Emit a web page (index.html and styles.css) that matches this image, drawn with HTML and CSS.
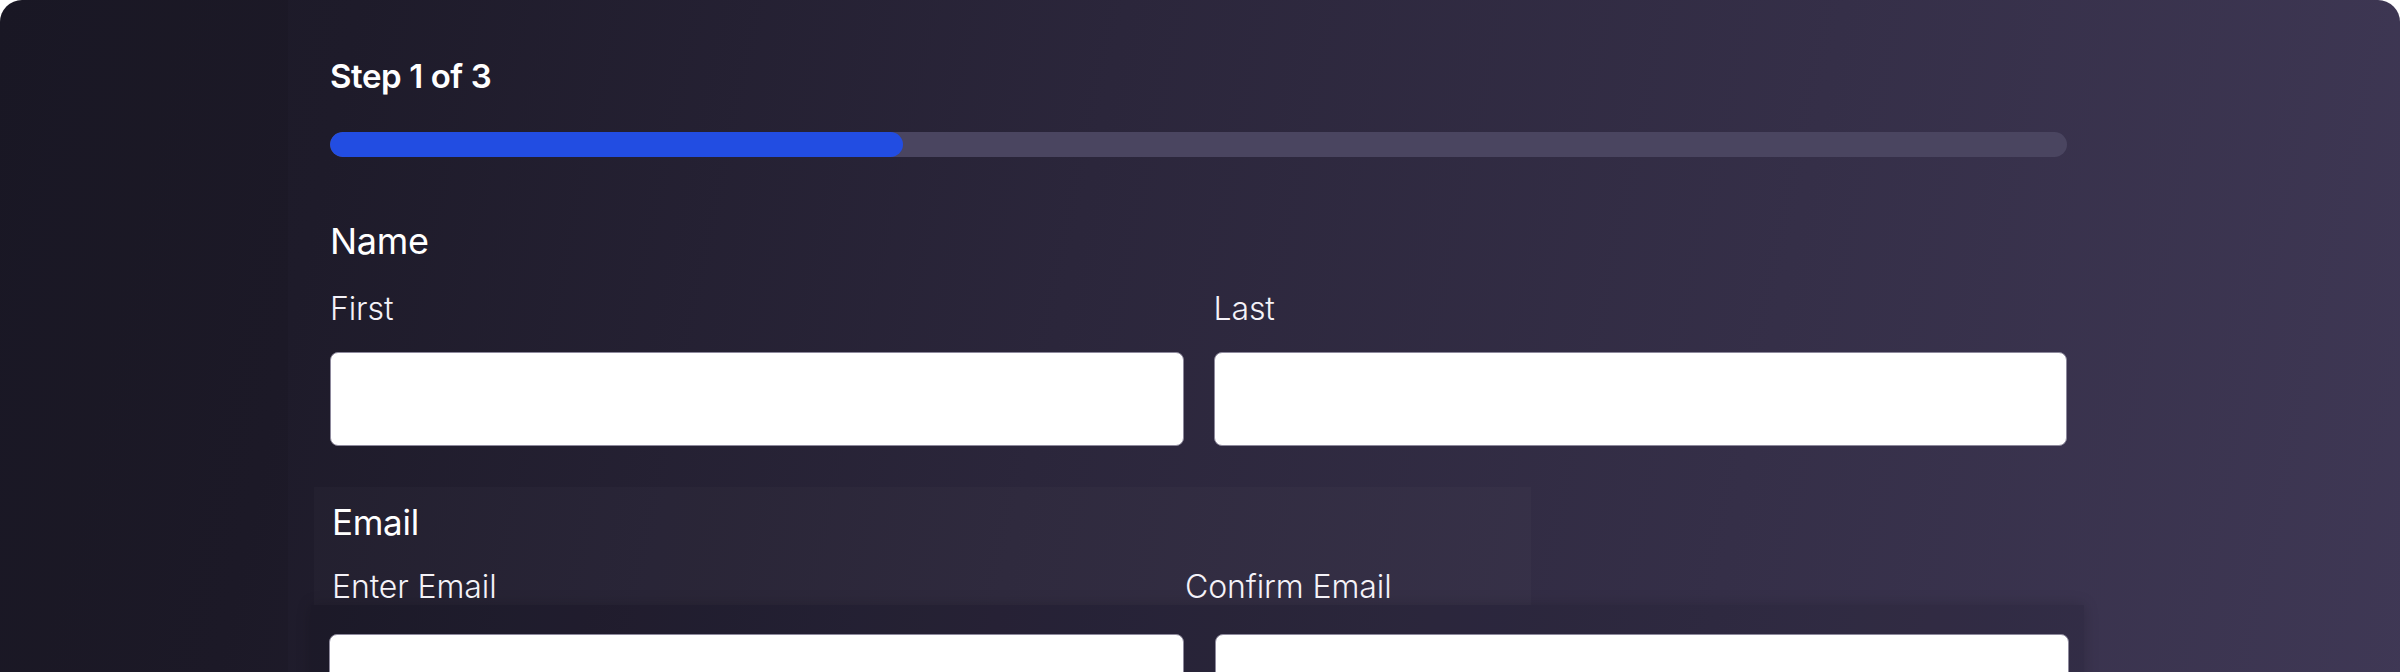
FILE: index.html
```html
<!DOCTYPE html>
<html lang="en">
<head>
<meta charset="utf-8">
<title>Multi-step form</title>
<link rel="stylesheet" href="styles.css">
</head>
<body>
<div class="card">
  <aside class="side"></aside>
  <main class="form">
    <div class="step">Step 1 of 3</div>
    <div class="progress"><div class="progress-fill" style="width:33%"></div></div>

    <section class="field">
      <div class="legend">Name</div>
      <div class="row">
        <label class="sub">
          <span class="sub-label">First</span>
          <input class="input" type="text">
        </label>
        <label class="sub">
          <span class="sub-label">Last</span>
          <input class="input" type="text">
        </label>
      </div>
    </section>

    <section class="field email">
      <div class="email-head">
        <div class="legend legend-email">Email</div>
        <div class="email-labels">
          <span class="sub-label">Enter Email</span>
          <span class="sub-label confirm">Confirm Email</span>
        </div>
      </div>
      <div class="email-band">
        <input class="input" type="email">
        <input class="input" type="email">
      </div>
    </section>
  </main>
  <div class="rest"></div>
</div>
</body>
</html>
```

FILE: styles.css
```css
html, body {
  margin: 0;
  padding: 0;
  background: #ffffff;
  overflow: hidden;
}

body {
  font-family: Inter, "Liberation Sans", sans-serif;
  color: #ffffff;
}

.card {
  display: flex;
  width: 2400px;
  min-height: 760px;
  border-radius: 22px 22px 0 0;
  background: linear-gradient(102deg, #1b1926 0%, #1e1b2a 14%, #2b263b 44%, #352f48 72%, #3f3855 100%);
  overflow: hidden;
}

.side {
  width: 288px;
  flex: none;
  background: rgba(0, 0, 0, 0.05);
}

.form {
  width: 1737px;
  flex: none;
  padding: 56px 17px 0 42px;
}

.rest {
  flex: 1;
}

.step {
  font-size: 33px;
  line-height: 40px;
  font-weight: 600;
  letter-spacing: -0.4px;
}

.progress {
  margin-top: 36px;
  height: 25px;
  border-radius: 13px;
  background: #4a4560;
  overflow: hidden;
}

.progress-fill {
  height: 100%;
  border-radius: 13px;
  background: #224de2;
}

.field {
  margin-top: 62px;
}

.legend {
  font-size: 36px;
  line-height: 44px;
  font-weight: 400;
  letter-spacing: -0.3px;
}

.row {
  display: grid;
  grid-template-columns: 1fr 1fr;
  column-gap: 30px;
  margin-top: 26px;
}

.sub {
  display: flex;
  flex-direction: column;
  gap: 23px;
}

.sub-label {
  font-size: 32px;
  line-height: 40px;
  font-weight: 300;
  letter-spacing: -0.1px;
  color: #f4f2f8;
}

.input {
  display: block;
  box-sizing: border-box;
  width: 100%;
  height: 94px;
  margin: 0;
  border: 1px solid #8d899c;
  border-radius: 8px;
  background: #ffffff;
  outline: none;
}

.field.email {
  margin-top: 41px;
}

.email-head {
  width: 1199px;
  margin-left: -16px;
  padding: 13px 0 0 18px;
  height: 105px;
  background: rgba(255, 255, 255, 0.02);
}

.legend-email {
  font-size: 35px;
}

.email-labels {
  display: flex;
  margin-top: 23px;
}

.email-labels .sub-label:first-child {
  width: 853px;
}

.email-band {
  display: flex;
  gap: 31px;
  width: 1740px;
  margin-left: -19px;
  padding: 29px 15px 40px 18px;
  background: rgba(12, 10, 22, 0.16);
  box-shadow: 0 0 14px rgba(0, 0, 0, 0.18);
}

.email-band .input {
  flex: 1;
  width: auto;
}
```
